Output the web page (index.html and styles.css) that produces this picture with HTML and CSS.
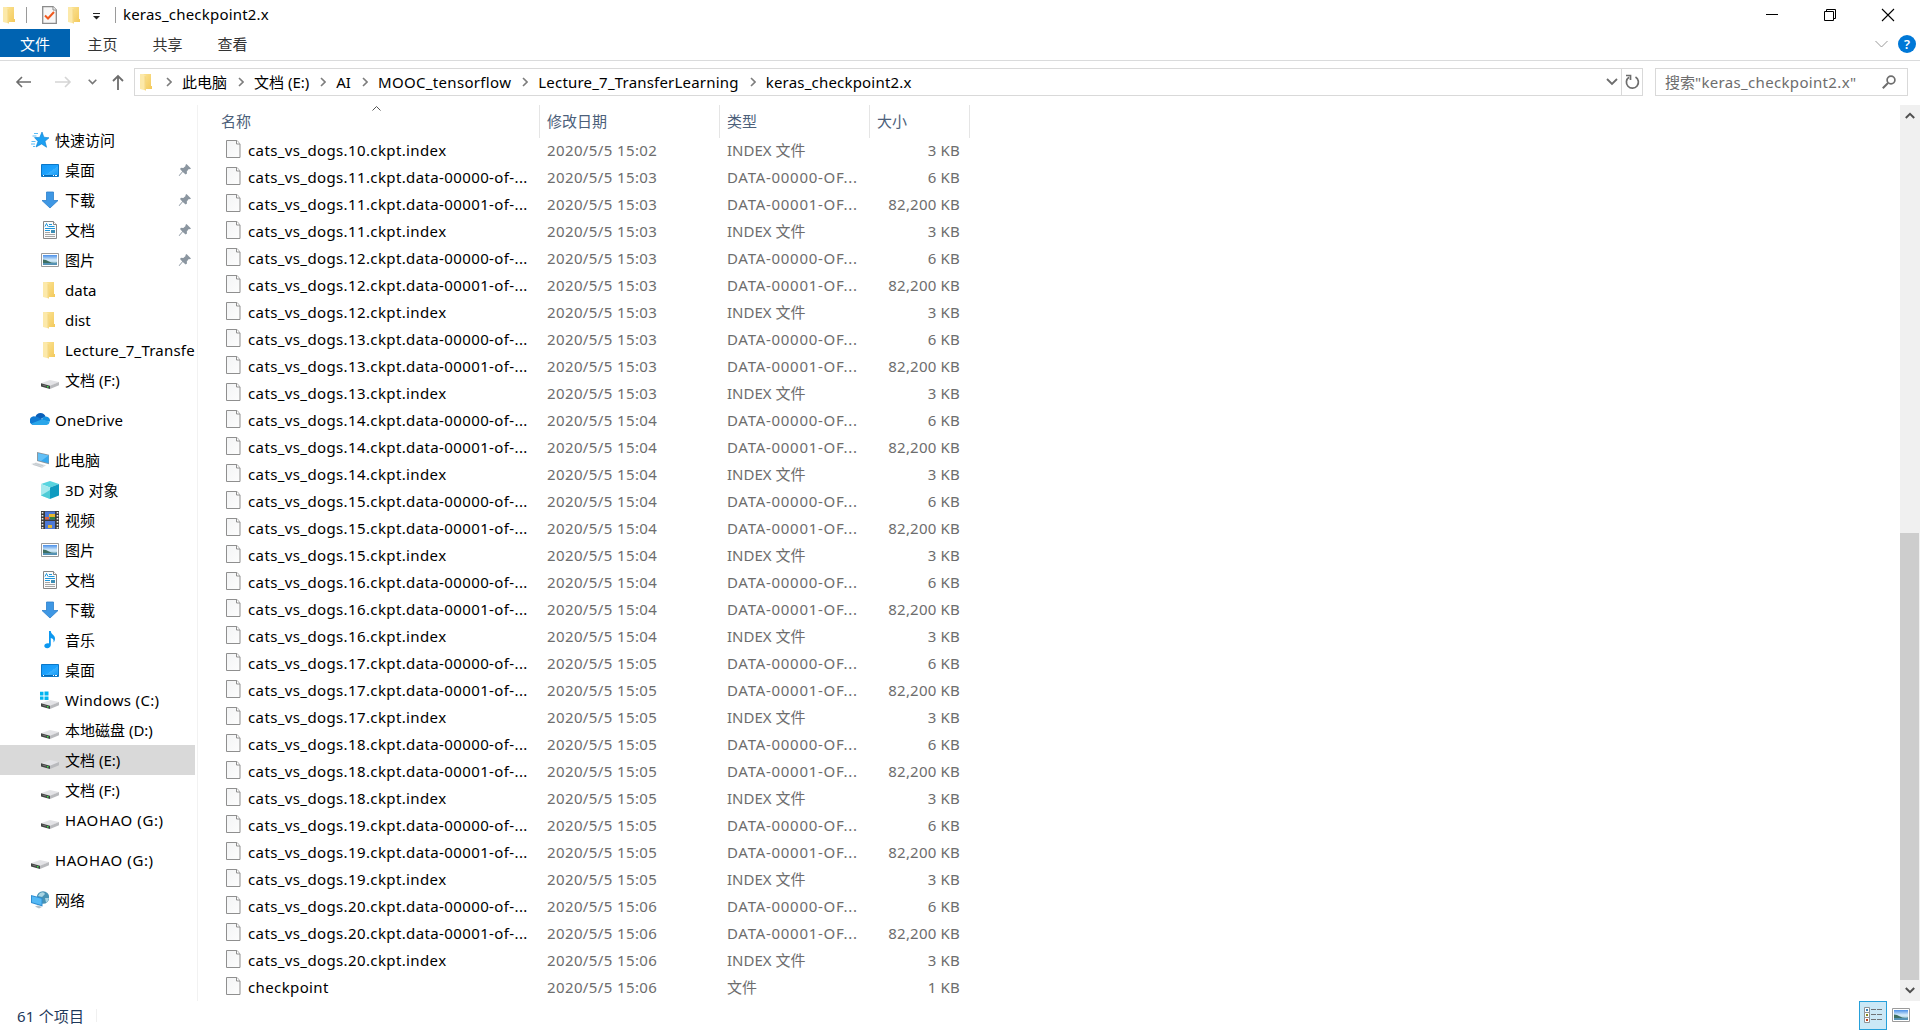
FILE: index.html
```html
<!DOCTYPE html>
<html lang="zh-CN">
<head>
  <meta charset="UTF-8" />
  <title>keras_checkpoint2.x</title>
  <link rel="stylesheet" href="styles.css">
</head>
<body>

  <!-- Icon set -->
  <svg class="defs" width="0" height="0">
    <defs>
      <linearGradient id="gFolder" x1="0" y1="0" x2="1" y2="1"><stop offset="0" stop-color="#fbe394"/><stop offset="1" stop-color="#f3c95b"/></linearGradient>
      <linearGradient id="gBlue" x1="0" y1="0" x2="1" y2="1"><stop offset="0" stop-color="#1496f5"/><stop offset=".55" stop-color="#1ea4ff"/><stop offset=".56" stop-color="#38b0ff"/><stop offset="1" stop-color="#1297f3"/></linearGradient>
      <linearGradient id="gSky" x1="0" y1="0" x2="0" y2="1"><stop offset="0" stop-color="#4a8fe8"/><stop offset=".5" stop-color="#d6ecfa"/><stop offset="1" stop-color="#8fc0dc"/></linearGradient>
      <linearGradient id="gPage" x1="0" y1="0" x2="1" y2="1"><stop offset="0" stop-color="#f3f4f5"/><stop offset="1" stop-color="#fdfdfd"/></linearGradient>
      <symbol id="folder" viewBox="0 0 18 18">
        <path d="M5 1h8v12h1v3H5z" fill="url(#gFolder)"/>
        <path d="M2 1h3l3 2v14.6L2 16z" fill="#fce9aa"/>
        <path d="M6.500 2.500L8 3.500v14l-1.500-.5z" fill="#f5d882"/>
      </symbol>
      <symbol id="star" viewBox="0 0 18 18">
        <path d="M11 1l1.900 5.200 5.100.6-4 3.500 1.600 6-5-3.300L5 16l2-5.600-3.500-3.800 5.200-.2z" fill="#1ca0f2" stroke="#0b7fd0" stroke-width=".6"/>
        <path d="M3 2.500h4M1.500 5h4M.5 10.500h4M0 13h4M2 15.500h2" stroke="#5bbcf5" stroke-width="1"/>
      </symbol>
      <symbol id="desktop" viewBox="0 0 18 18">
        <path d="M.5 3.500h17v12H.5z" fill="url(#gBlue)" stroke="#0b78c8"/>
        <path d="M1 14.500h16" stroke="#0869b4"/>
        <path d="M2 14.500h1M12 14.500h1M14 14.500h2" stroke="#fff"/>
      </symbol>
      <symbol id="download" viewBox="0 0 18 18">
        <path d="M5.500 1h7v8.500H17L9 17 1 9.500h4.500z" fill="#3e97e4" stroke="#2c7fcb" stroke-width=".8"/>
      </symbol>
      <symbol id="document" viewBox="0 0 18 18">
        <path d="M2.500.5h10l3 3v14h-13z" fill="#fbfbfb" stroke="#868686"/>
        <path d="M12.500.5v3h3" fill="#fff" stroke="#868686"/>
        <path d="M4 5.500L5.500 2.500 7 5.500M8 3.500h3M7.500 5.500h6M4 7.500h10M4 9.500h5" stroke="#1e96dc" fill="none"/>
        <path d="M10 9h4v3h-4z" fill="#3b8db5"/>
        <path d="M4 11.500h5M4 13.500h10M4 15.500h10" stroke="#a5a5a5"/>
      </symbol>
      <symbol id="picture" viewBox="0 0 18 18">
        <path d="M.5 2.500h17v13H.5z" fill="#fff" stroke="#9b9b9b"/>
        <path d="M2 4h14v10H2z" fill="url(#gSky)"/>
        <path d="M2 8.500q3 0 6 2t8 1V12H2z" fill="#3e6f62"/>
        <path d="M2 12h14v2H2z" fill="#5592b4"/>
      </symbol>
      <symbol id="drive" viewBox="0 0 18 18">
        <path d="M0 9.300L9 6l9 2-9 4z" fill="#e3e3e6"/>
        <path d="M0 9.300l9 2.500V15L0 12.500z" fill="#3f4140"/>
        <path d="M9 11.800L18 8v3.300L9 15z" fill="#b9babd"/>
        <path d="M1.500 11l4 1.200" stroke="#777" stroke-width="1"/>
        <path d="M6 12h1.500v1.500H6z" fill="#3ddc4a"/>
      </symbol>
      <symbol id="windrive" viewBox="0 0 18 18" overflow="visible">
        <use href="#drive" x="0" y="0" width="18" height="18"/>
        <path d="M-1.500-3H8V6.500h-9.500z" fill="#fff"/>
        <path d="M-1-2.200h3.500v3.700H-1zM3.500-2.500H7.500v4H3.500zM-1 2.500h3.500v3.300H-1zM3.500 2.500H7.500v3.500H3.500z" fill="#00b4f0"/>
      </symbol>
      <symbol id="cloud" viewBox="0 0 20 14">
        <path d="M5.500 4.500A5.300 5.300 0 0 1 15.500 4.500L9 8z" fill="#0a5fb8"/>
        <path d="M5 4.500a4.500 4.500 0 0 1 3 .8L13 8 3 13A4.300 4.300 0 0 1 5 4.500z" fill="#0f79d2"/>
        <path d="M12.500 5.500a4.500 4.500 0 0 1 3.500-1 4.300 4.300 0 0 1 4 5l-8-1z" fill="#1490df"/>
        <path d="M11.500 7.500l8 2A3.500 3.500 0 0 1 16.500 13H4q-1.800-.3-2.500-1.500z" fill="#2aa6ea"/>
      </symbol>
      <symbol id="pc" viewBox="0 0 18 18">
        <path d="M6 1l12.500 2.800v9.700L6 10z" fill="#8b979f"/>
        <path d="M7 2.200l10.600 2.400v7.600L7 9.200z" fill="#35a8ee"/>
        <path d="M7 2.200l10.600 2.400L10 10 7 9.200z" fill="#63c0f6"/>
        <path d="M0 13l5-1.500 10 2.800-4 2.700z" fill="#d9dde0"/>
        <path d="M2 13.500l8 2.200M4 12.500l8 2.200" stroke="#b5bcc2" stroke-width=".6"/>
      </symbol>
      <symbol id="cube" viewBox="0 0 18 18">
        <path d="M9 0l9 3-9 3.500L0 3z" fill="#58d4df"/>
        <path d="M0 3l9 3.500V18l-9-3.500z" fill="#a5e9ee"/>
        <path d="M18 3L9 6.500V18l9-3.500z" fill="#0f9bc0"/>
        <path d="M0 14.500L9 9v9z" fill="#4ecbd6"/>
      </symbol>
      <symbol id="video" viewBox="0 0 18 18">
        <path d="M0 0h18v18H0z" fill="#3a3a3a"/>
        <path d="M1.500 1v17M16.500 1v17" stroke="#f0f0f0" stroke-width="1.600" stroke-dasharray="1.500 1.500"/>
        <path d="M4 .5h10v8H4zM4 10h10v8H4z" fill="#4c78d8"/>
        <path d="M8 3h6v3H8zM7 14h4v3H7z" fill="#e3b62f"/>
        <path d="M4 6h4v2.500H4z" fill="#e0603a"/><path d="M9 6h5v2.500H9z" fill="#2f7f43"/>
      </symbol>
      <symbol id="music" viewBox="0 0 18 18">
        <path d="M8 0h1.800c.2 3.500 4.200 4 4.200 7.500 0 1.700-.6 3-1.500 4 .6-3.300-.9-4-2.700-4.600V14c0 2-1.700 3.200-3.600 3.200-1.800 0-2.900-1-2.900-2.200 0-1.900 2.200-3.100 4.700-2.600z" fill="#0c98f0"/>
      </symbol>
      <symbol id="network" viewBox="0 0 18 18">
        <circle cx="12" cy="6.500" r="6.300" fill="#4893b5"/>
        <path d="M9 2q4-2 5 1l-3 3-4-1zM14 7l4 0q-1 4-3 4.500z" fill="#a9d5e3"/>
        <path d="M0 4l11.500 3v8.500L0 12z" fill="#2f8ed2"/>
        <path d="M1 5.300l9.500 2.500v6.300L1 11.200z" fill="#54b9f5"/>
        <path d="M4 15.500l3-1 4 1.500-3 1.500z" fill="#b5c1c9"/>
      </symbol>
      <symbol id="pin" viewBox="0 0 14 14">
        <path d="M8.500 1L13 5.500l-1.200.8-1-.2-2 2.300.2 2.200-1.400 1L4.800 8.900 1.300 13 .7 12.500 4.300 8.400 2 6l1-1.300 2.300.2 2.300-2-.2-1z" fill="#8b96a0"/>
      </symbol>
      <symbol id="file" viewBox="0 0 15 18">
        <path d="M.5.5H11L14 4v13.500H.5z" fill="url(#gPage)" stroke="#8f8f8f"/>
        <path d="M10.500.5V4H14" fill="#fff" stroke="#8f8f8f"/>
      </symbol>
      <symbol id="crumb" viewBox="0 0 6 10">
        <path d="M1 1l4 4-4 4" fill="none" stroke="#7d7d7d" stroke-width="1.600"/>
      </symbol>
    </defs>
  </svg>

  <div class="window">

    <!-- Title bar -->
    <div class="titlebar">
      <svg class="tb-folder"><use href="#folder"/></svg>
      <span class="tb-sep"></span>
      <svg class="tb-check" viewBox="0 0 15 18">
        <path d="M.7.7H11l3.300 3.300v13.300H.7z" fill="#f7f7f7" stroke="#8b8b8b" stroke-width="1.300"/>
        <path d="M11 .7V4h3.300" fill="#fff" stroke="#8b8b8b"/>
        <path d="M3 9.500l3 3 6-6.500" fill="none" stroke="#f0591e" stroke-width="2"/>
      </svg>
      <svg class="tb-folder second"><use href="#folder"/></svg>
      <svg class="tb-drop" viewBox="0 0 8 7"><path d="M0 .5h7" stroke="#222"/><path d="M0 3h7L3.500 6.500z" fill="#222"/></svg>
      <span class="tb-sep last"></span>
      <span class="tb-title">keras_checkpoint2.x</span>
      <div class="win-buttons">
        <svg width="12" height="12" viewBox="0 0 12 12"><path d="M0 5.500h12" stroke="#000"/></svg>
        <svg width="12" height="12" viewBox="0 0 12 12"><path d="M.5 2.500h9v9h-9zM2.500 2.500v-2h9v9h-2" fill="none" stroke="#000"/></svg>
        <svg width="12" height="12" viewBox="0 0 12 12"><path d="M0 0l12 12M12 0L0 12" stroke="#000" stroke-width="1.100"/></svg>
      </div>
    </div>

    <!-- Ribbon tabs -->
    <div class="tabs">
      <span class="tab file-tab">文件</span>
      <span class="tab">主页</span>
      <span class="tab">共享</span>
      <span class="tab">查看</span>
      <div class="tabs-right">
        <svg width="13" height="8" viewBox="0 0 13 8"><path d="M.5 1l6 6 6-6" fill="none" stroke="#9a9a9a"/></svg>
        <span class="help">?</span>
      </div>
    </div>

    <!-- Address bar -->
    <div class="navbar">
      <svg class="nav-back" width="16" height="12" viewBox="0 0 16 12"><path d="M6 1L1 6l5 5M1 6h14" fill="none" stroke="#6d6d6d" stroke-width="1.600"/></svg>
      <svg class="nav-fwd" width="16" height="12" viewBox="0 0 16 12"><path d="M10 1l5 5-5 5M15 6H0" fill="none" stroke="#d5d5d5" stroke-width="1.600"/></svg>
      <svg class="nav-hist" width="9" height="6" viewBox="0 0 9 6"><path d="M.7.8l3.800 3.800L8.300.8" fill="none" stroke="#777" stroke-width="1.600"/></svg>
      <svg class="nav-up" width="12" height="15" viewBox="0 0 12 15"><path d="M1 6l5-5 5 5M6 1v14" fill="none" stroke="#6d6d6d" stroke-width="1.800"/></svg>
      <div class="address">
        <svg class="addr-folder"><use href="#folder"/></svg>
        <svg class="crumb first"><use href="#crumb"/></svg><span>此电脑</span>
        <svg class="crumb"><use href="#crumb"/></svg><span>文档 (E:)</span>
        <svg class="crumb"><use href="#crumb"/></svg><span>AI</span>
        <svg class="crumb"><use href="#crumb"/></svg><span class="wide">MOOC_tensorflow</span>
        <svg class="crumb"><use href="#crumb"/></svg><span class="latin">Lecture_7_TransferLearning</span>
        <svg class="crumb"><use href="#crumb"/></svg><span class="latin">keras_checkpoint2.x</span>
        <div class="addr-end">
          <svg width="12" height="8" viewBox="0 0 12 8"><path d="M1 1l5 5 5-5" fill="none" stroke="#6d6d6d" stroke-width="1.800"/></svg>
          <span class="refresh"><svg width="15" height="16" viewBox="0 0 15 16"><path d="M10.500 3A6 6 0 1 1 4 3.200" fill="none" stroke="#6d6d6d" stroke-width="1.700"/><path d="M1 1.500h4.500V6" fill="none" stroke="#6d6d6d" stroke-width="1.700"/></svg></span>
        </div>
      </div>
      <div class="search">
        <span>搜索<span class="wide">"keras_checkpoint2.x"</span></span>
        <svg width="14" height="14" viewBox="0 0 14 14"><circle cx="9" cy="5" r="3.900" fill="none" stroke="#6d6d6d" stroke-width="1.700"/><path d="M6 8L.8 13.200" stroke="#6d6d6d" stroke-width="2"/></svg>
      </div>
    </div>

    <div class="main">
      <!-- Navigation pane -->
      <div class="sidebar">
        <div class="group">
          <div class="item top"><svg><use href="#star"/></svg><span>快速访问</span></div>
          <div class="item"><svg><use href="#desktop"/></svg><span>桌面</span><svg class="pin"><use href="#pin"/></svg></div>
          <div class="item"><svg><use href="#download"/></svg><span>下载</span><svg class="pin"><use href="#pin"/></svg></div>
          <div class="item"><svg><use href="#document"/></svg><span>文档</span><svg class="pin"><use href="#pin"/></svg></div>
          <div class="item"><svg><use href="#picture"/></svg><span>图片</span><svg class="pin"><use href="#pin"/></svg></div>
          <div class="item"><svg><use href="#folder"/></svg><span>data</span></div>
          <div class="item"><svg><use href="#folder"/></svg><span>dist</span></div>
          <div class="item"><svg><use href="#folder"/></svg><span class="latin">Lecture_7_Transfe</span></div>
          <div class="item"><svg class="low"><use href="#drive"/></svg><span>文档 (F:)</span></div>
        </div>
        <div class="group">
          <div class="item top"><svg class="cloud"><use href="#cloud"/></svg><span class="latin">OneDrive</span></div>
        </div>
        <div class="group">
          <div class="item top"><svg><use href="#pc"/></svg><span>此电脑</span></div>
          <div class="item"><svg><use href="#cube"/></svg><span>3D 对象</span></div>
          <div class="item"><svg><use href="#video"/></svg><span>视频</span></div>
          <div class="item"><svg><use href="#picture"/></svg><span>图片</span></div>
          <div class="item"><svg><use href="#document"/></svg><span>文档</span></div>
          <div class="item"><svg><use href="#download"/></svg><span>下载</span></div>
          <div class="item"><svg><use href="#music"/></svg><span>音乐</span></div>
          <div class="item"><svg><use href="#desktop"/></svg><span>桌面</span></div>
          <div class="item"><svg class="low"><use href="#windrive"/></svg><span class="wide">Windows (C:)</span></div>
          <div class="item"><svg class="low"><use href="#drive"/></svg><span>本地磁盘 (D:)</span></div>
          <div class="item selected"><svg class="low"><use href="#drive"/></svg><span>文档 (E:)</span></div>
          <div class="item"><svg class="low"><use href="#drive"/></svg><span>文档 (F:)</span></div>
          <div class="item"><svg class="low"><use href="#drive"/></svg><span class="caps">HAOHAO (G:)</span></div>
        </div>
        <div class="group">
          <div class="item top"><svg class="low"><use href="#drive"/></svg><span class="caps">HAOHAO (G:)</span></div>
        </div>
        <div class="group">
          <div class="item top"><svg><use href="#network"/></svg><span>网络</span></div>
        </div>
      </div>

      <!-- File list -->
      <div class="files">
        <div class="row header">
          <span class="name">名称<svg class="sort" width="9" height="5" viewBox="0 0 9 5"><path d="M.5 4.500l4-4 4 4" fill="none" stroke="#555"/></svg></span>
          <span class="date">修改日期</span>
          <span class="type">类型</span>
          <span class="size">大小</span>
        </div>
        <div id="list"></div>
      </div>

      <!-- Scrollbar -->
      <div class="scrollbar">
        <svg width="10" height="7" viewBox="0 0 10 7"><path d="M.8 6L5 1.800 9.200 6" fill="none" stroke="#505050" stroke-width="2"/></svg>
        <div class="track"><div class="thumb"></div></div>
        <svg width="10" height="7" viewBox="0 0 10 7"><path d="M.8 1L5 5.200 9.200 1" fill="none" stroke="#505050" stroke-width="2"/></svg>
      </div>
    </div>

    <!-- Status bar -->
    <div class="status">
      <span class="count">61 个项目</span>
      <span class="status-sep"></span>
      <div class="views">
        <span class="view-details">
          <svg width="18" height="17" viewBox="0 0 18 17">
            <path d="M.5.500h5v5h-5zM.5 5.500h5v5h-5zM.5 10.500h5v5h-5z" fill="#fff" stroke="#8f9396"/>
            <path d="M2 2h2v2H2z" fill="#3a7fb5"/><path d="M2 7h2v2H2z" fill="#8a8a20"/><path d="M2 12h2v2H2z" fill="#c2401c"/>
            <path d="M7 2.500h5M13 2.500h5M7 7.500h5M13 7.500h5M7 12.500h5M13 12.500h5" stroke="#6f7376"/>
          </svg>
        </span>
        <svg class="view-large"><use href="#picture"/></svg>
      </div>
    </div>
  </div>

<script src="files.js"></script>
</body>
</html>
```
FILE: styles.css
```css
html, body {
  margin: 0; padding: 0; height: 100%;
  overflow: hidden;
  background: #fff;
}
body {
  font-family: "Noto Sans", "Noto Sans CJK SC", sans-serif;
  font-size: 15px;
  line-height: 20px;
  color: #000;
}
.defs {
  position: absolute;
}
svg {
  display: block;
  flex: none;
  overflow: visible;
}
.window {
  display: flex;
  flex-direction: column;
  height: 1030px;
}
.latin { letter-spacing: 0.2px; }
.wide { letter-spacing: 0.33px; }
.caps { letter-spacing: 0.6px; }

/* Title bar */
.titlebar {
  display: flex;
  align-items: center;
  height: 29px;
}
.tb-folder { width: 18px; height: 18px; margin-left: 1px; }
.tb-folder.second { margin-left: 9px; }
.tb-sep {
  width: 1px; height: 16px;
  margin-left: 7px;
  background: #9a9a9a;
}
.tb-sep.last { margin-left: 14px; }
.tb-check { width: 15px; height: 18px; margin-left: 15px; }
.tb-drop { width: 8px; height: 7px; margin: 3px 0 0 9px; }
.tb-title {
  margin-left: 7px;
  padding-bottom: 1px;
  letter-spacing: 0.2px;
}
.win-buttons {
  display: flex;
  gap: 46px;
  margin-left: auto;
  padding-right: 26px;
}

/* Ribbon tabs */
.tabs {
  display: flex;
  height: 31px;
  border-bottom: 1px solid #dadbdc;
}
.tab {
  width: 65px; height: 28px;
  line-height: 30px;
  text-align: center;
  color: #333;
}
.file-tab {
  width: 70px;
  background: #0063b1;
  color: #fff;
}
.tabs-right {
  display: flex;
  align-items: center;
  gap: 10px;
  height: 30px;
  margin-left: auto;
  padding-right: 4px;
}
.help {
  width: 18px; height: 18px;
  border-radius: 50%;
  background: #0078d7;
  color: #fff;
  font-size: 13px;
  font-weight: 600;
  line-height: 18px;
  text-align: center;
}

/* Address bar */
.navbar {
  display: flex;
  align-items: center;
  height: 42px;
  padding: 0 12px 2px 16px;
}
.nav-fwd { margin-left: 23px; }
.nav-hist { margin-left: 17px; }
.nav-up { margin-left: 15px; }
.address {
  display: flex;
  align-items: center;
  flex: 1;
  height: 26px;
  margin-left: 10px;
  border: 1px solid #d9d9d9;
  white-space: nowrap;
}
.addr-folder { width: 18px; height: 18px; margin-left: 3px; }
.crumb { width: 6px; height: 10px; margin: 0 10px 0 11px; }
.crumb.first { margin-left: 10px; }
.addr-end {
  display: flex;
  align-items: center;
  margin-left: auto;
}
.refresh {
  display: flex;
  align-items: center;
  justify-content: center;
  width: 20px; height: 26px;
  margin-left: 3px;
  border-left: 1px solid #d9d9d9;
}
.search {
  display: flex;
  align-items: center;
  justify-content: space-between;
  box-sizing: border-box;
  width: 253px; height: 28px;
  margin-left: 12px;
  padding: 0 11px 0 9px;
  border: 1px solid #d9d9d9;
  color: #6d6d6d;
}

/* Main area */
.main {
  display: flex;
  height: 896px;
}
.sidebar {
  width: 197px;
  padding-top: 20px;
  height: 876px;
  border-right: 1px solid #f2f2f2;
}
.group { margin-bottom: 10px; }
.item {
  display: flex;
  align-items: center;
  box-sizing: border-box;
  width: 195px; height: 30px;
  padding-left: 41px;
  white-space: nowrap;
}
.item.top { padding-left: 31px; }
.item.selected { background: #d9d9d9; }
.item svg { width: 18px; height: 18px; }
.item span { margin-left: 6px; }
.item svg.low { margin-top: 6px; }
.item svg.cloud {
  width: 20px; height: 14px;
  margin: 0 -1px 2px -1px;
}
.item svg.pin {
  width: 14px; height: 14px;
  margin-left: auto;
  margin-right: 3px;
}

/* File list */
.files {
  flex: 1;
  padding-left: 16px;
}
.row {
  display: grid;
  grid-template-columns: 326px 180px 150px 100px;
  height: 27px;
  line-height: 27px;
  color: #6d6d6d;
  white-space: nowrap;
}
.row.header {
  height: 32px;
  line-height: 33px;
  color: #4c607a;
}
.header span {
  border-right: 1px solid #e5e5e5;
}
.header .name {
  position: relative;
  padding-left: 7px;
}
.sort {
  position: absolute;
  left: 158px; top: 1px;
}
.row .name { color: #000; }
.row.header .name { color: #4c607a; }
.file-name {
  display: flex;
  padding-left: 12px;
  letter-spacing: 0.38px;
}
.file-name svg {
  width: 15px; height: 18px;
  margin: 3px 7px 0 0;
}
.date, .type, .header .size { padding-left: 7px; }
#list .date { letter-spacing: 0.38px; }
#list .type.data { letter-spacing: 0.72px; }
#list .size {
  padding-right: 10px;
  letter-spacing: 0.2px;
  text-align: right;
}

/* Scrollbar */
.scrollbar {
  display: flex;
  flex-direction: column;
  align-items: center;
  justify-content: space-between;
  box-sizing: border-box;
  width: 20px;
  padding: 7px 0;
  background: #f0f0f0;
}
.track {
  width: 20px; height: 868px;
  box-sizing: border-box;
  padding-top: 414px;
}
.thumb {
  width: 19px; height: 447px;
  background: #cdcdcd;
}

/* Status bar */
.status {
  display: flex;
  align-items: center;
  height: 29px;
  color: #1e395b;
}
.count {
  margin-left: 17px;
  letter-spacing: 0.2px;
}
.status-sep {
  width: 1px; height: 13px;
  margin-left: 12px;
  background: #f0f0f0;
}
.views {
  display: flex;
  align-items: center;
  margin-left: auto;
  padding-right: 10px;
}
.view-details {
  display: flex;
  align-items: center;
  justify-content: center;
  width: 26px; height: 27px;
  border: 1px solid #26a0da;
  background: #cbe8f6;
}
.view-large { width: 18px; height: 18px; margin: 0 0 2px 5px; }
```
FILE: files.js
```js
// Checkpoint files visible in the list, oldest first
const files = [['cats_vs_dogs.10.ckpt.index', '15:02', 'INDEX 文件', '3 KB']];
const times = ['15:03', '15:03', '15:03', '15:04', '15:04', '15:04', '15:05', '15:05', '15:05', '15:06'];

times.forEach((time, i) => {
  const base = 'cats_vs_dogs.' + (11 + i) + '.ckpt.';
  files.push([base + 'data-00000-of-...', time, 'DATA-00000-OF...', '6 KB']);
  files.push([base + 'data-00001-of-...', time, 'DATA-00001-OF...', '82,200 KB']);
  files.push([base + 'index', time, 'INDEX 文件', '3 KB']);
});
files.push(['checkpoint', '15:06', '文件', '1 KB']);

document.getElementById('list').innerHTML = files.map(([name, time, type, size]) => `
  <div class="row">
    <span class="name file-name"><svg><use href="#file"/></svg><span>${name}</span></span>
    <span class="date">2020/5/5 ${time}</span>
    <span class="type ${type.startsWith('DATA') ? 'data' : ''}">${type}</span>
    <span class="size">${size}</span>
  </div>`).join('');
```
